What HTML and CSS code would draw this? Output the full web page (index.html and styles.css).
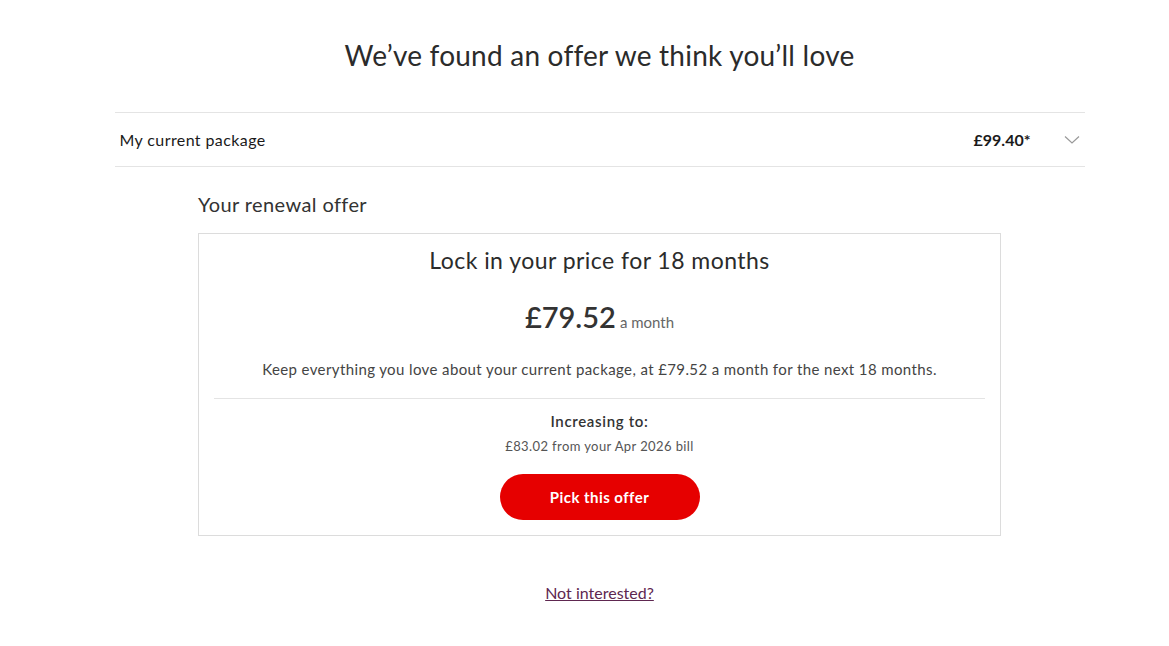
FILE: index.html
```html
<!DOCTYPE html>
<html lang="en">
<head>
<meta charset="utf-8">
<title>Renewal offer</title>
<link rel="stylesheet" href="styles.css">
</head>
<body>
<div class="page">
  <main class="container">
    <h1 class="title">We’ve found an offer we think you’ll love</h1>
    <div class="package-row">
      <span class="package-label">My current package</span>
      <span class="package-right">
        <span class="package-price">£99.40*</span>
        <svg class="chevron" width="16" height="10" viewBox="0 0 16 10" aria-hidden="true"><path d="M1 1.5 L8 8 L15 1.5" fill="none" stroke="#999" stroke-width="1.2"/></svg>
      </span>
    </div>
    <section class="offer">
      <h2 class="offer-heading">Your renewal offer</h2>
      <div class="card">
        <h3 class="card-title">Lock in your price for 18 months</h3>
        <p class="price"><span class="price-amount">£79.52</span> <span class="price-unit">a month</span></p>
        <p class="desc">Keep everything you love about your current package, at £79.52 a month for the next 18 months.</p>
        <hr class="divider">
        <p class="increase-title">Increasing to:</p>
        <p class="increase-text">£83.02 from your Apr 2026 bill</p>
        <button class="btn">Pick this offer</button>
      </div>
    </section>
    <div class="not-row"><a href="#" class="not-link">Not interested?</a></div>
  </main>
</div>
</body>
</html>
```
FILE: styles.css
```css
* { box-sizing: border-box; }
body {
  margin: 0;
  background: #fff;
  font-family: Lato, "Noto Sans", sans-serif;
  color: #333;
  letter-spacing: 0.025em;
}
.page { padding-left: 30px; }
.container {
  max-width: 970px;
  margin: 0 auto;
  padding-top: 36px;
}
.title {
  margin: 0;
  text-align: center;
  font-size: 28px;
  font-weight: 400;
  line-height: 38px;
  color: #2b2b2b;
  letter-spacing: 0.008em;
}
.package-row {
  margin-top: 38px;
  border-top: 1px solid #e4e4e4;
  border-bottom: 1px solid #e4e4e4;
  height: 55px;
  display: flex;
  align-items: center;
  justify-content: space-between;
  padding: 0 5px;
}
.package-label { font-size: 16px; color: #1a1a1a; }
.package-right { display: flex; align-items: center; gap: 33px; }
.package-price { font-size: 16px; font-weight: 700; color: #1a1a1a; letter-spacing: 0; }
.offer {
  width: 803px;
  margin: 0 auto;
}
.offer-heading {
  margin: 24px 0 16px;
  font-size: 20px;
  font-weight: 400;
  line-height: 26px;
  color: #333;
}
.card {
  border: 1px solid #dcdcdc;
  padding: 11px 15px 15px;
  text-align: center;
}
.card-title {
  margin: 0;
  font-size: 23px;
  font-weight: 400;
  line-height: 30px;
  color: #2b2b2b;
  letter-spacing: 0.02em;
}
.price { margin: 25px 0 0; line-height: 34px; letter-spacing: 0; }
.price-amount { font-size: 29px; font-weight: 600; color: #333; }
.price-unit { font-size: 15px; color: #666; }
.desc {
  margin: 20px 0 0;
  font-size: 15px;
  line-height: 20px;
  color: #444;
  letter-spacing: 0.026em;
}
.divider {
  margin: 19px 0 0;
  border: 0;
  border-top: 1px solid #e4e4e4;
}
.increase-title {
  margin: 12px 0 0;
  font-size: 15px;
  font-weight: 600;
  line-height: 20px;
  color: #333;
  letter-spacing: 0.045em;
}
.increase-text {
  margin: 6px 0 0;
  font-size: 13px;
  line-height: 18px;
  color: #555;
}
.btn {
  margin-top: 19px;
  width: 200px;
  height: 46px;
  border: 0;
  border-radius: 23px;
  background: #e60000;
  color: #fff;
  font-family: inherit;
  font-size: 15px;
  font-weight: 700;
  letter-spacing: 0.03em;
}
.not-row { text-align: center; margin-top: 47px; }
.not-link {
  font-size: 16px;
  color: #5e2750;
  text-decoration: underline;
  letter-spacing: 0;
}
```
